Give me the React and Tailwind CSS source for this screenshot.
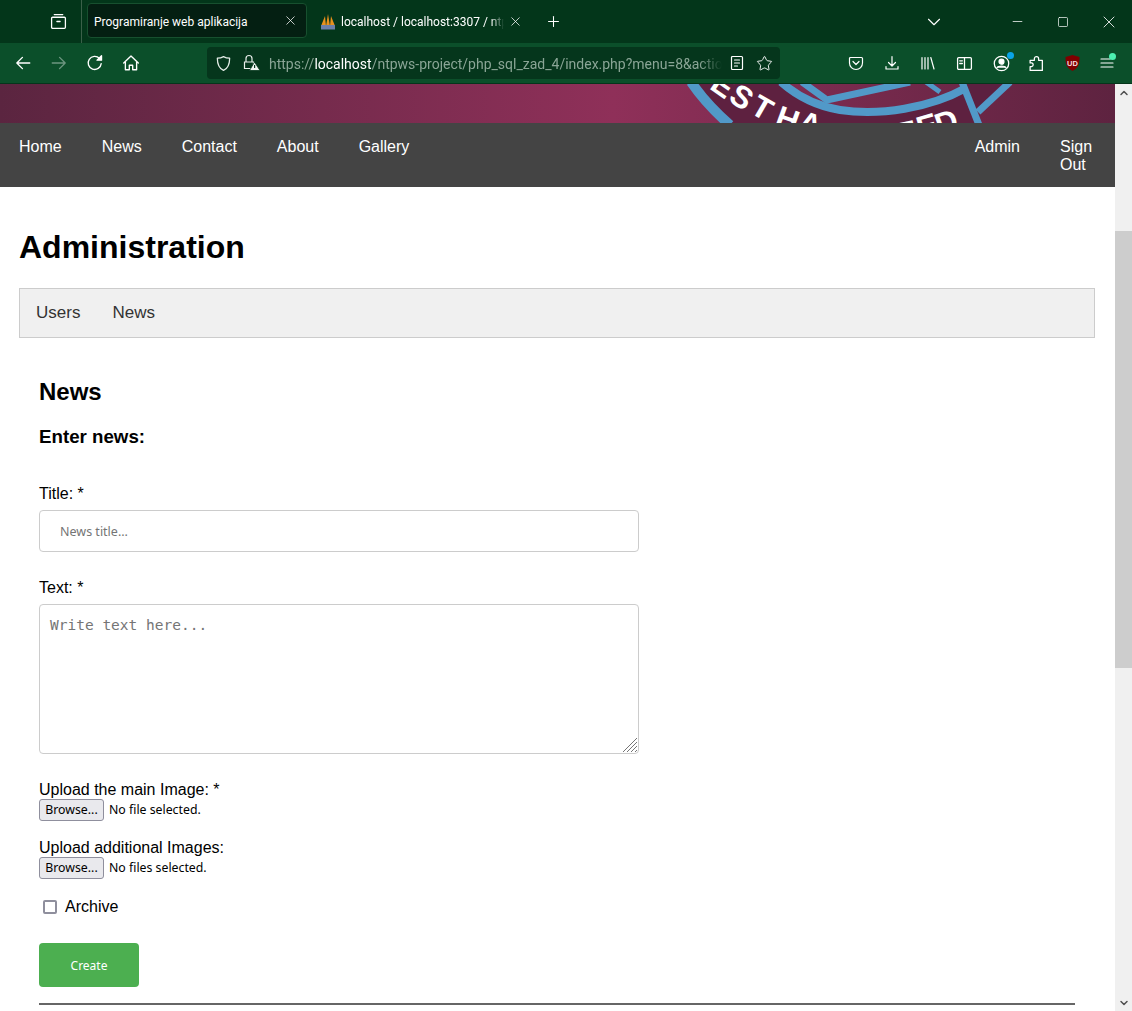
import { X, Plus, ChevronDown, Minus, Square, Star, ChevronUp } from "lucide-react";

const uiFont = "font-['Noto_Sans',sans-serif]";
const chromeFont = "font-['Roboto',sans-serif]";

function Ico({ size = 18, children, className = "" }) {
  return (
    <svg width={size} height={size} viewBox="0 0 16 16" fill="none" stroke="currentColor" strokeWidth="1.2" strokeLinecap="round" strokeLinejoin="round" className={`shrink-0 ${className}`}>
      {children}
    </svg>
  );
}

function TabBar() {
  return (
    <div className={`flex h-[43px] items-stretch bg-[#03361a] text-white ${chromeFont}`}>
      <div className="flex w-[82px] items-center justify-end border-r border-[#3b6049] pr-[14px]">
        <Ico size={17}>
          <path d="M4 1.5h8M2.5 4h11a1 1 0 0 1 1 1v8.5a1 1 0 0 1-1 1h-11a1 1 0 0 1-1-1V5a1 1 0 0 1 1-1zM6.5 8h3" />
        </Ico>
      </div>
      <div className="ml-[5px] mt-[3px] flex h-[35px] w-[220px] items-center rounded border border-[#17502f] bg-[#041f12] pl-[6px] pr-[8px]">
        <span className="flex-1 whitespace-nowrap pt-[2px] text-[12px]">Programiranje web aplikacija</span>
        <X size={15} strokeWidth={1.2} />
      </div>
      <div className="ml-[13px] flex w-[210px] items-center">
        <svg width="16" height="18" viewBox="0 0 16 18" className="shrink-0">
          <path d="M1 13 L5 3 L6 13zM6 13 L8 1 L10 13zM10 13 L11 3 L15 13z" fill="#e8911c" />
          <rect x="1" y="12" width="14" height="4.500" fill="#6c7fa8" />
        </svg>
        <span className="ml-[5px] w-[163px] overflow-hidden whitespace-nowrap pt-[1px] text-[12px] [mask-image:linear-gradient(to_right,black_92%,transparent)]">localhost / localhost:3307 / ntpws_project</span>
        <X size={15} strokeWidth={1.2} className="ml-[4px]" />
      </div>
      <div className="ml-[15px] flex items-center">
        <Plus size={17} strokeWidth={1.5} />
      </div>
      <div className="ml-auto flex items-center pr-[13px]">
        <ChevronDown size={22} strokeWidth={1.2} />
        <Minus size={15} strokeWidth={1.2} className="ml-[65px]" />
        <Square size={12} strokeWidth={1.4} className="ml-[32px]" />
        <X size={20} strokeWidth={1} className="ml-[30px]" />
      </div>
    </div>
  );
}

function Toolbar() {
  return (
    <div className={`flex h-[41px] items-center border-b border-[#05351b] bg-[#0b4f2a] text-white ${chromeFont}`}>
      <div className="flex w-[207px] items-center pl-[14px]">
        <Ico>
          <path d="M14 8H2.5M7.5 3 2.5 8l5 5" />
        </Ico>
        <Ico className="ml-[18px] opacity-40">
          <path d="M2 8h11.5M8.500 3l5 5-5 5" />
        </Ico>
        <Ico className="ml-[18px]">
          <path d="M13.500 8.500A5.800 5.800 0 1 1 12 4" />
          <path d="M13.800 1.500v4h-4z" fill="currentColor" />
        </Ico>
        <Ico className="ml-[18px]">
          <path d="M1.500 8 8 1.800 14.500 8M3 7v7h3.500v-4h3v4H13V7" />
        </Ico>
      </div>
      <div className="flex h-[32px] w-[573px] items-center rounded bg-[#05361c] pl-[8px] pr-[7px]">
        <Ico size={17} className="text-[#e4ede7]">
          <path d="M8 1.500c2 1.200 3.800 1.500 5.800 1.500 0 6-1.500 9.500-5.800 11.500C3.700 12.500 2.200 9 2.200 3c2 0 3.800-.3 5.800-1.500z" />
        </Ico>
        <svg width="19" height="18" viewBox="0 0 19 18" className="ml-[10px] shrink-0">
          <path d="M4 8V4.500a3 3 0 0 1 6 0V8M2.500 8h9v6.500h-9z" fill="none" stroke="#e8eeea" strokeWidth="1.200" />
          <path d="M12.500 8 18 16.500H7.500z" fill="#f4f6f5" stroke="#05361c" strokeWidth="0.800" />
          <path d="M12.600 11v3" stroke="#05361c" strokeWidth="1.200" />
        </svg>
        <div className="ml-[8px] flex-1 overflow-hidden whitespace-nowrap pt-[2px] text-[14px] leading-5 text-[#8aa596] [mask-image:linear-gradient(to_right,black_95%,transparent)]">
          https://<span className="text-white">localhost</span>/ntpws-project/php_sql_zad_4/index.php?menu=8&amp;action
        </div>
        <Ico size={16} className="ml-[7px]">
          <path d="M3.500 1.500h9a1 1 0 0 1 1 1v11a1 1 0 0 1-1 1h-9a1 1 0 0 1-1-1v-11a1 1 0 0 1 1-1zM5.500 5h5M5.500 8h5M5.500 11h3" />
        </Ico>
        <Star size={17} strokeWidth={1.3} className="ml-[11px]" />
      </div>
      <div className="ml-[68px] flex items-center">
        <Ico size={16}>
          <path d="M2.500 2.500h11a1 1 0 0 1 1 1V8A6.500 6.500 0 0 1 1.500 8V3.500a1 1 0 0 1 1-1zM5 6.500 8 9.500l3-3" />
        </Ico>
        <Ico size={16} className="ml-[20px]">
          <path d="M8 1.500v9M4.500 7.500 8 11l3.500-3.500M2 11.500v2.500h12v-2.500" />
        </Ico>
        <Ico size={16} className="ml-[20px]">
          <path d="M2 2.500V14M5 2.500V14M8 2.500V14M10.800 2.500 14 14" />
        </Ico>
        <Ico size={17} className="ml-[20px]">
          <path d="M2.500 2.500h11a1 1 0 0 1 1 1v9a1 1 0 0 1-1 1h-11a1 1 0 0 1-1-1v-9a1 1 0 0 1 1-1zM8 2.500v11M3.500 5.500h2.500M3.500 8h2.500" />
        </Ico>
        <div className="relative ml-[20px]">
          <Ico size={17}>
            <circle cx="8" cy="8" r="6.800" />
            <circle cx="8" cy="6.300" r="2.300" fill="currentColor" />
            <path d="M3.800 12c1-2 7.400-2 8.400 0" fill="currentColor" />
          </Ico>
          <span className="absolute -right-[4px] -top-[3px] size-[7px] rounded-full bg-[#0aa5e8]"></span>
        </div>
        <Ico size={17} className="ml-[18px]">
          <path d="M6 3.500a2 2 0 1 1 4 0V5h3.500v9.500H2V11h1.500a1.800 1.800 0 0 0 0-3.500H2V5h4z" />
        </Ico>
        <svg width="17" height="18" viewBox="1 0 15 18" className="ml-[19px] shrink-0">
          <path d="M8.500 1 15.500 3c0 7-1 11-7 14C2.500 14 1.500 10 1.500 3z" fill="#800000" />
          <text x="8.500" y="11.500" textAnchor="middle" fontSize="7.500" fontWeight="700" fill="#f4dede" fontFamily="Liberation Sans, sans-serif">UD</text>
        </svg>
        <div className="relative ml-[18px]">
          <Ico size={16}>
            <path d="M2 4h9M2 8h12M2 12h12" />
          </Ico>
          <span className="absolute -right-[1px] -top-[2px] size-[7px] rounded-full bg-[#4cf0b0]"></span>
        </div>
      </div>
    </div>
  );
}

function Scrollbar() {
  return (
    <div className="flex w-[17px] shrink-0 flex-col bg-[#f0f0f0] text-[#505050]">
      <div className="flex h-[17px] items-center justify-center">
        <ChevronUp size={12} strokeWidth={3} />
      </div>
      <div className="mt-[130px] h-[437px] bg-[#cdcdcd]"></div>
      <div className="mt-auto flex h-[17px] items-center justify-center">
        <ChevronDown size={12} strokeWidth={3} />
      </div>
    </div>
  );
}

function Banner() {
  const letter = "fill-white font-['Liberation_Sans',sans-serif] font-bold";
  return (
    <div className="relative h-[39px] overflow-hidden bg-linear-to-r from-[#5b2540] via-[#8f3059] via-55% to-[#5e2340]">
      <svg viewBox="0 84 1115 39" className="absolute inset-0 h-full w-full">
        {/* crest, only its lower part shows */}
        <path d="M693 84 L728 123 H980 L963 88 C930 108 880 116 840 110 C815 105 795 95 780 84Z" fill="#5e2140" />
        <path d="M960 84 L978 112 L1008 84Z" fill="#5c2040" />
        <path d="M691 82 C702 98 715 112 730 125" stroke="#5199c8" strokeWidth="10" fill="none" />
        <path d="M781 82 C797 96 815 106 840 110 C880 116 930 108 966 88" stroke="#5199c8" strokeWidth="8" fill="none" />
        <path d="M802 82 L827 100 L910 82" stroke="#5199c8" strokeWidth="7" fill="none" />
        <path d="M926 82 L940 92" stroke="#5199c8" strokeWidth="5" fill="none" />
        <path d="M962 82 L979 125" stroke="#5199c8" strokeWidth="7" fill="none" />
        <path d="M978 112 L1010 82" stroke="#5199c8" strokeWidth="7" fill="none" />
        <text x="0" y="0" fontSize="31" textAnchor="middle" className={letter} transform="translate(717 94) rotate(35)">E</text>
        <text x="0" y="0" fontSize="31" textAnchor="middle" className={letter} transform="translate(736 106) rotate(33)">S</text>
        <text x="0" y="0" fontSize="31" textAnchor="middle" className={letter} transform="translate(757 117) rotate(30)">T</text>
        <text x="0" y="0" fontSize="31" textAnchor="middle" className={letter} transform="translate(784 129) rotate(20)">H</text>
        <text x="0" y="0" fontSize="31" textAnchor="middle" className={letter} transform="translate(807 134) rotate(18)">A</text>
        <text x="0" y="0" fontSize="31" textAnchor="middle" className={letter} transform="translate(908 143) rotate(-12)">T</text>
        <text x="0" y="0" fontSize="31" textAnchor="middle" className={letter} transform="translate(930 136) rotate(-16)">E</text>
        <text x="0" y="0" fontSize="31" textAnchor="middle" className={letter} transform="translate(950 132) rotate(-20)">D</text>
      </svg>
    </div>
  );
}

function Nav() {
  return (
    <nav className="flex h-[64px] bg-[#444444] pl-[19px] pr-[23px] pt-[15px] text-[16px] leading-[18px] text-white">
      <a>Home</a>
      <a className="ml-[40px]">News</a>
      <a className="ml-[40px]">Contact</a>
      <a className="ml-[40px]">About</a>
      <a className="ml-[40px]">Gallery</a>
      <a className="ml-auto">Admin</a>
      <a className="ml-[40px] w-[32px]">Sign Out</a>
    </nav>
  );
}

function FileRow({ label, empty }) {
  return (
    <div>
      <div className="text-[16px] leading-[18px]">{label}</div>
      <div className={`flex h-[22px] items-center text-[12.300px] ${uiFont}`}>
        <span className="flex h-[22px] w-[65px] items-center justify-center rounded-[3px] border border-[#8f8f9d] bg-[#e9e9ed] pt-[1px]">Browse...</span>
        <span className="ml-[5px] pt-[1px]">{empty}</span>
      </div>
    </div>
  );
}

function NewsForm() {
  return (
    <div className="pl-[39px] pr-[40px]">
      <h2 className="mt-[40px] text-[24px] font-bold leading-[28px]">News</h2>
      <h3 className="mt-[20px] text-[18.720px] font-bold leading-[22px]">Enter news:</h3>
      <div className="mt-[37px] w-[600px]">
        <div className="text-[16px] leading-[18px]">Title: *</div>
        <div className={`mt-[7px] flex h-[42px] items-center rounded border border-[#cccccc] pl-[20px] pt-[2px] text-[12.500px] text-[#757575] ${uiFont}`}>News title...</div>
        <div className="mt-[27px] text-[16px] leading-[18px]">Text: *</div>
        <div className="relative mt-[7px] h-[150px] rounded border border-[#cccccc] pl-[10px] pt-[10px] font-['DejaVu_Sans_Mono',monospace] text-[14.500px] leading-[20px] text-[#757575]">
          Write text here...
          <svg width="16" height="16" viewBox="0 0 16 16" className="absolute bottom-0 right-0 text-[#757575]">
            <path d="M1 15 15 1M5 15 15 5M9 15 15 9M13 15 15 13" stroke="currentColor" strokeWidth="1" />
          </svg>
        </div>
      </div>
      <div className="mt-[27px]">
        <FileRow label="Upload the main Image: *" empty="No file selected." />
      </div>
      <div className="mt-[18px]">
        <FileRow label="Upload additional Images:" empty="No files selected." />
      </div>
      <div className="mt-[19px] flex h-[18px] items-center pl-[4px] text-[16px]">
        <span className="size-[14px] rounded-[2px] border-2 border-[#8f8f9d]"></span>
        <span className="ml-[8px]">Archive</span>
      </div>
      <div className={`mt-[27px] flex h-[44px] w-[100px] items-center justify-center rounded bg-[#4caf50] pt-[1px] text-[12px] text-white ${uiFont}`}>Create</div>
      <div className="mt-[16px] h-[2px] bg-[#666666]"></div>
    </div>
  );
}

export default function App() {
  return (
    <div className="flex h-[1011px] w-[1132px] flex-col overflow-hidden bg-white font-['Liberation_Sans',Arial,sans-serif] text-black">
      <TabBar />
      <Toolbar />
      <div className="flex min-h-0 flex-1">
        <main className="min-w-0 flex-1 overflow-hidden">
          <Banner />
          <Nav />
          <h1 className="ml-[19px] mt-[41px] text-[32px] font-bold leading-[38px]">Administration</h1>
          <div className="ml-[19px] mr-[20px] mt-[22px] flex h-[50px] items-center gap-[32px] border border-[#cccccc] bg-[#f0f0f0] pl-[16px] text-[17px] text-[#333333]">
            <a>Users</a>
            <a>News</a>
          </div>
          <NewsForm />
        </main>
        <Scrollbar />
      </div>
    </div>
  );
}
